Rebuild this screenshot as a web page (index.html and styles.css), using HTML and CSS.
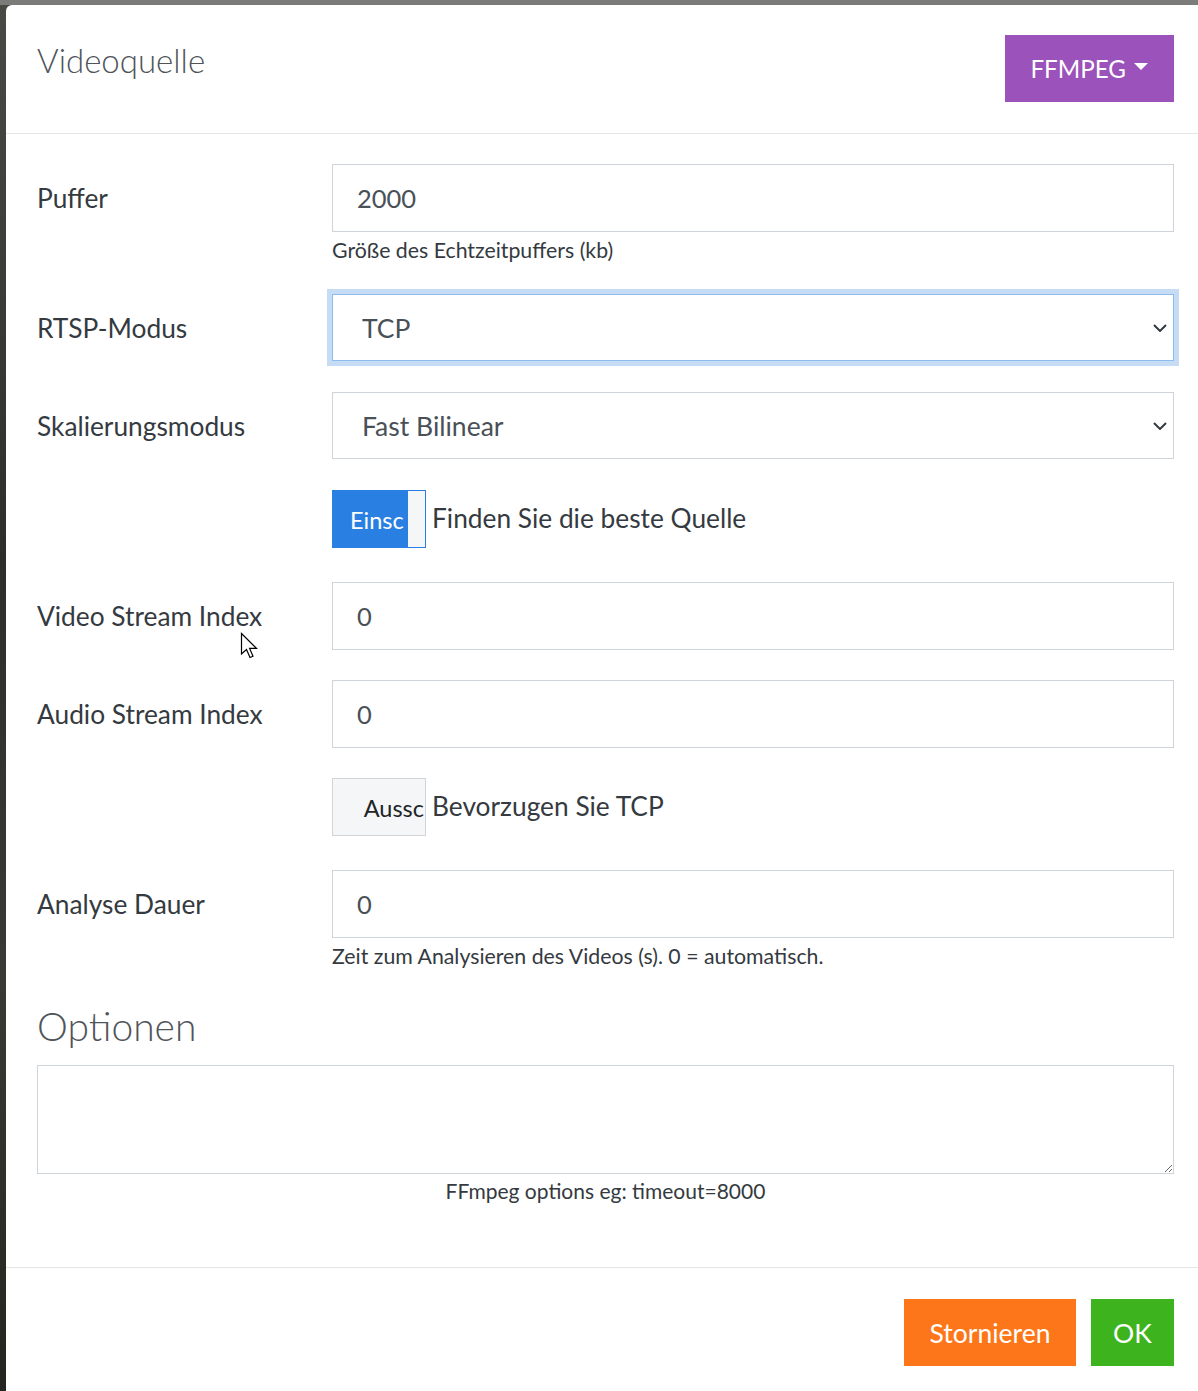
FILE: index.html
```html
<!DOCTYPE html>
<html lang="de">
<head>
<meta charset="utf-8">
<title>Videoquelle</title>
<link rel="stylesheet" href="styles.css">
</head>
<body>
<div class="backdrop">
  <div class="modal">
    <div class="modal-header">
      <h4 class="modal-title">Videoquelle</h4>
      <button class="btn btn-purple dropdown-toggle">FFMPEG<span class="caret"></span></button>
    </div>
    <div class="modal-body">
      <div class="form-row">
        <label class="col-label">Puffer</label>
        <div class="col-field">
          <input class="form-control" type="text" value="2000">
          <div class="help">Größe des Echtzeitpuffers (kb)</div>
        </div>
      </div>
      <div class="form-row">
        <label class="col-label">RTSP-Modus</label>
        <div class="col-field">
          <select class="form-control select focus"><option>TCP</option></select>
        </div>
      </div>
      <div class="form-row">
        <label class="col-label">Skalierungsmodus</label>
        <div class="col-field">
          <select class="form-control select"><option>Fast Bilinear</option></select>
        </div>
      </div>
      <div class="form-row toggle-row">
        <div class="col-label"></div>
        <div class="col-field check">
          <div class="toggle on"><span class="toggle-on">Einsc</span><span class="handle"></span></div>
          <span class="check-label">Finden Sie die beste Quelle</span>
        </div>
      </div>
      <div class="form-row">
        <label class="col-label">Video Stream Index</label>
        <div class="col-field">
          <input class="form-control" type="text" value="0">
        </div>
      </div>
      <div class="form-row">
        <label class="col-label">Audio Stream Index</label>
        <div class="col-field">
          <input class="form-control" type="text" value="0">
        </div>
      </div>
      <div class="form-row toggle-row">
        <div class="col-label"></div>
        <div class="col-field check">
          <div class="toggle off"><span class="toggle-off">Aussc</span></div>
          <span class="check-label">Bevorzugen Sie TCP</span>
        </div>
      </div>
      <div class="form-row">
        <label class="col-label">Analyse Dauer</label>
        <div class="col-field">
          <input class="form-control" type="text" value="0">
          <div class="help">Zeit zum Analysieren des Videos (s). 0 = automatisch.</div>
        </div>
      </div>
      <h3 class="section-title">Optionen</h3>
      <textarea class="form-control textarea"></textarea>
      <div class="help center">FFmpeg options eg: timeout=8000</div>
    </div>
    <div class="modal-footer">
      <button class="btn btn-orange">Stornieren</button>
      <button class="btn btn-green">OK</button>
    </div>
    <svg class="cursor" width="20" height="30" viewBox="0 0 20 30">
      <path d="M1.5 1.5 L1.5 22 L6.5 17.5 L10 25.5 L13 24.2 L9.6 16.4 L16.5 16.4 Z" fill="#fff" stroke="#000" stroke-width="1.2" stroke-linejoin="miter"/>
    </svg>
  </div>
</div>
</body>
</html>
```

FILE: styles.css
```css
html, body {
  margin: 0;
  padding: 0;
  height: 100%;
  overflow: hidden;
}
body {
  background: linear-gradient(#7b7b7a 0, #7b7b7a 5px, #4a4a45 5px, #2d2d29 40%, #3a3a35 70%, #25251f 100%);
  font-family: "Lato", "Liberation Sans", sans-serif;
  color: #343a40;
}
.backdrop {
  padding: 5px 0 0 6px;
}
.modal {
  position: relative;
  width: 1199px;
  background: #fff;
  border-radius: 6px 0 0 0;
  min-height: 1400px;
}
.modal-header {
  display: flex;
  justify-content: space-between;
  align-items: flex-start;
  padding: 30px 31px 31px 31px;
  border-bottom: 1px solid #e5e5e5;
}
.modal-title {
  margin: 5px 0 0 0;
  font-weight: 300;
  font-size: 33px;
  line-height: 40px;
  color: #4f5459;
}
.btn {
  border: 0;
  border-radius: 0;
  font-family: inherit;
  font-size: 26.5px;
  color: #fff;
  height: 67px;
  padding: 0 24px;
  cursor: pointer;
}
.btn-purple {
  background: #9b52ba;
  display: flex;
  align-items: center;
  gap: 8px;
  font-size: 24.2px;
  padding: 0 26px 0 25px;
}
.caret {
  width: 0;
  height: 0;
  border-left: 7.5px solid transparent;
  border-right: 7.5px solid transparent;
  border-top: 7.5px solid #fff;
  margin-top: -4px;
}
.modal-body {
  padding: 30px 31px 62px 31px;
}
.form-row {
  display: flex;
  margin-bottom: 30px;
}
.col-label {
  width: 295px;
  flex: none;
  display: flex;
  align-items: center;
  height: 68px;
  font-size: 26.3px;
  color: #343a40;
}
.col-field {
  flex: 1;
}
.form-control {
  display: block;
  box-sizing: border-box;
  width: 100%;
  height: 68px;
  border: 1px solid #ced4da;
  border-radius: 0;
  padding: 0 24px;
  font-family: inherit;
  font-size: 25.5px;
  color: #495057;
  background: #fff;
  outline: none;
}
.select {
  appearance: none;
  -webkit-appearance: none;
  padding-left: 29px;
  height: 67px;
  font-size: 26.5px;
  background-image: url("data:image/svg+xml,%3Csvg xmlns='http://www.w3.org/2000/svg' width='14' height='8' viewBox='0 0 14 8'%3E%3Cpath d='M1 1l6 6 6-6' fill='none' stroke='%23343a40' stroke-width='2'/%3E%3C/svg%3E");
  background-repeat: no-repeat;
  background-position: right 6px center;
}
.select.focus {
  border-color: #8fbcf0;
  box-shadow: 0 0 0 5px #c6dcf5;
}
.help {
  margin-top: 4px;
  font-size: 21.3px;
  line-height: 28px;
  color: #343a40;
}
.help.center {
  text-align: center;
  font-size: 21px;
  margin-top: 3px;
}
.toggle-row .col-label {
  height: 62px;
}
.check {
  display: flex;
  align-items: flex-start;
}
.check-label {
  font-size: 26.3px;
  line-height: 56px;
  margin-left: 6px;
  color: #343a40;
}
.toggle {
  box-sizing: border-box;
  width: 94px;
  height: 58px;
  overflow: hidden;
  display: flex;
  font-size: 23.5px;
  line-height: 58px;
  white-space: nowrap;
}
.toggle.on {
  background: #2a80e2;
  border: 1px solid #2a80e2;
}
.toggle.on .toggle-on {
  width: 75px;
  flex: none;
  overflow: hidden;
  color: #fff;
  padding-left: 17px;
  box-sizing: border-box;
}
.toggle.on .handle {
  width: 17px;
  flex: none;
  background: #f5f6f8;
}
.toggle.off {
  background: #f5f6f8;
  border: 1px solid #d2d4d7;
  justify-content: flex-end;
}
.toggle.off .toggle-off {
  padding-right: 1px;
  color: #212529;
}
.section-title {
  margin: 32px 0 15px 0;
  font-weight: 300;
  font-size: 39px;
  line-height: 48px;
  color: #4f5459;
}
.textarea {
  height: 109px;
  resize: vertical;
  padding: 10px;
}
.modal-footer {
  display: flex;
  justify-content: flex-end;
  gap: 15px;
  padding: 31px 31px 31px 31px;
  border-top: 1px solid #e5e5e5;
}
.btn-orange {
  background: #fd7619;
  width: 172px;
  padding: 0;
}
.btn-green {
  background: #3db41e;
  width: 83px;
  padding: 0;
}
.cursor {
  position: absolute;
  left: 234px;
  top: 627px;
}
```
